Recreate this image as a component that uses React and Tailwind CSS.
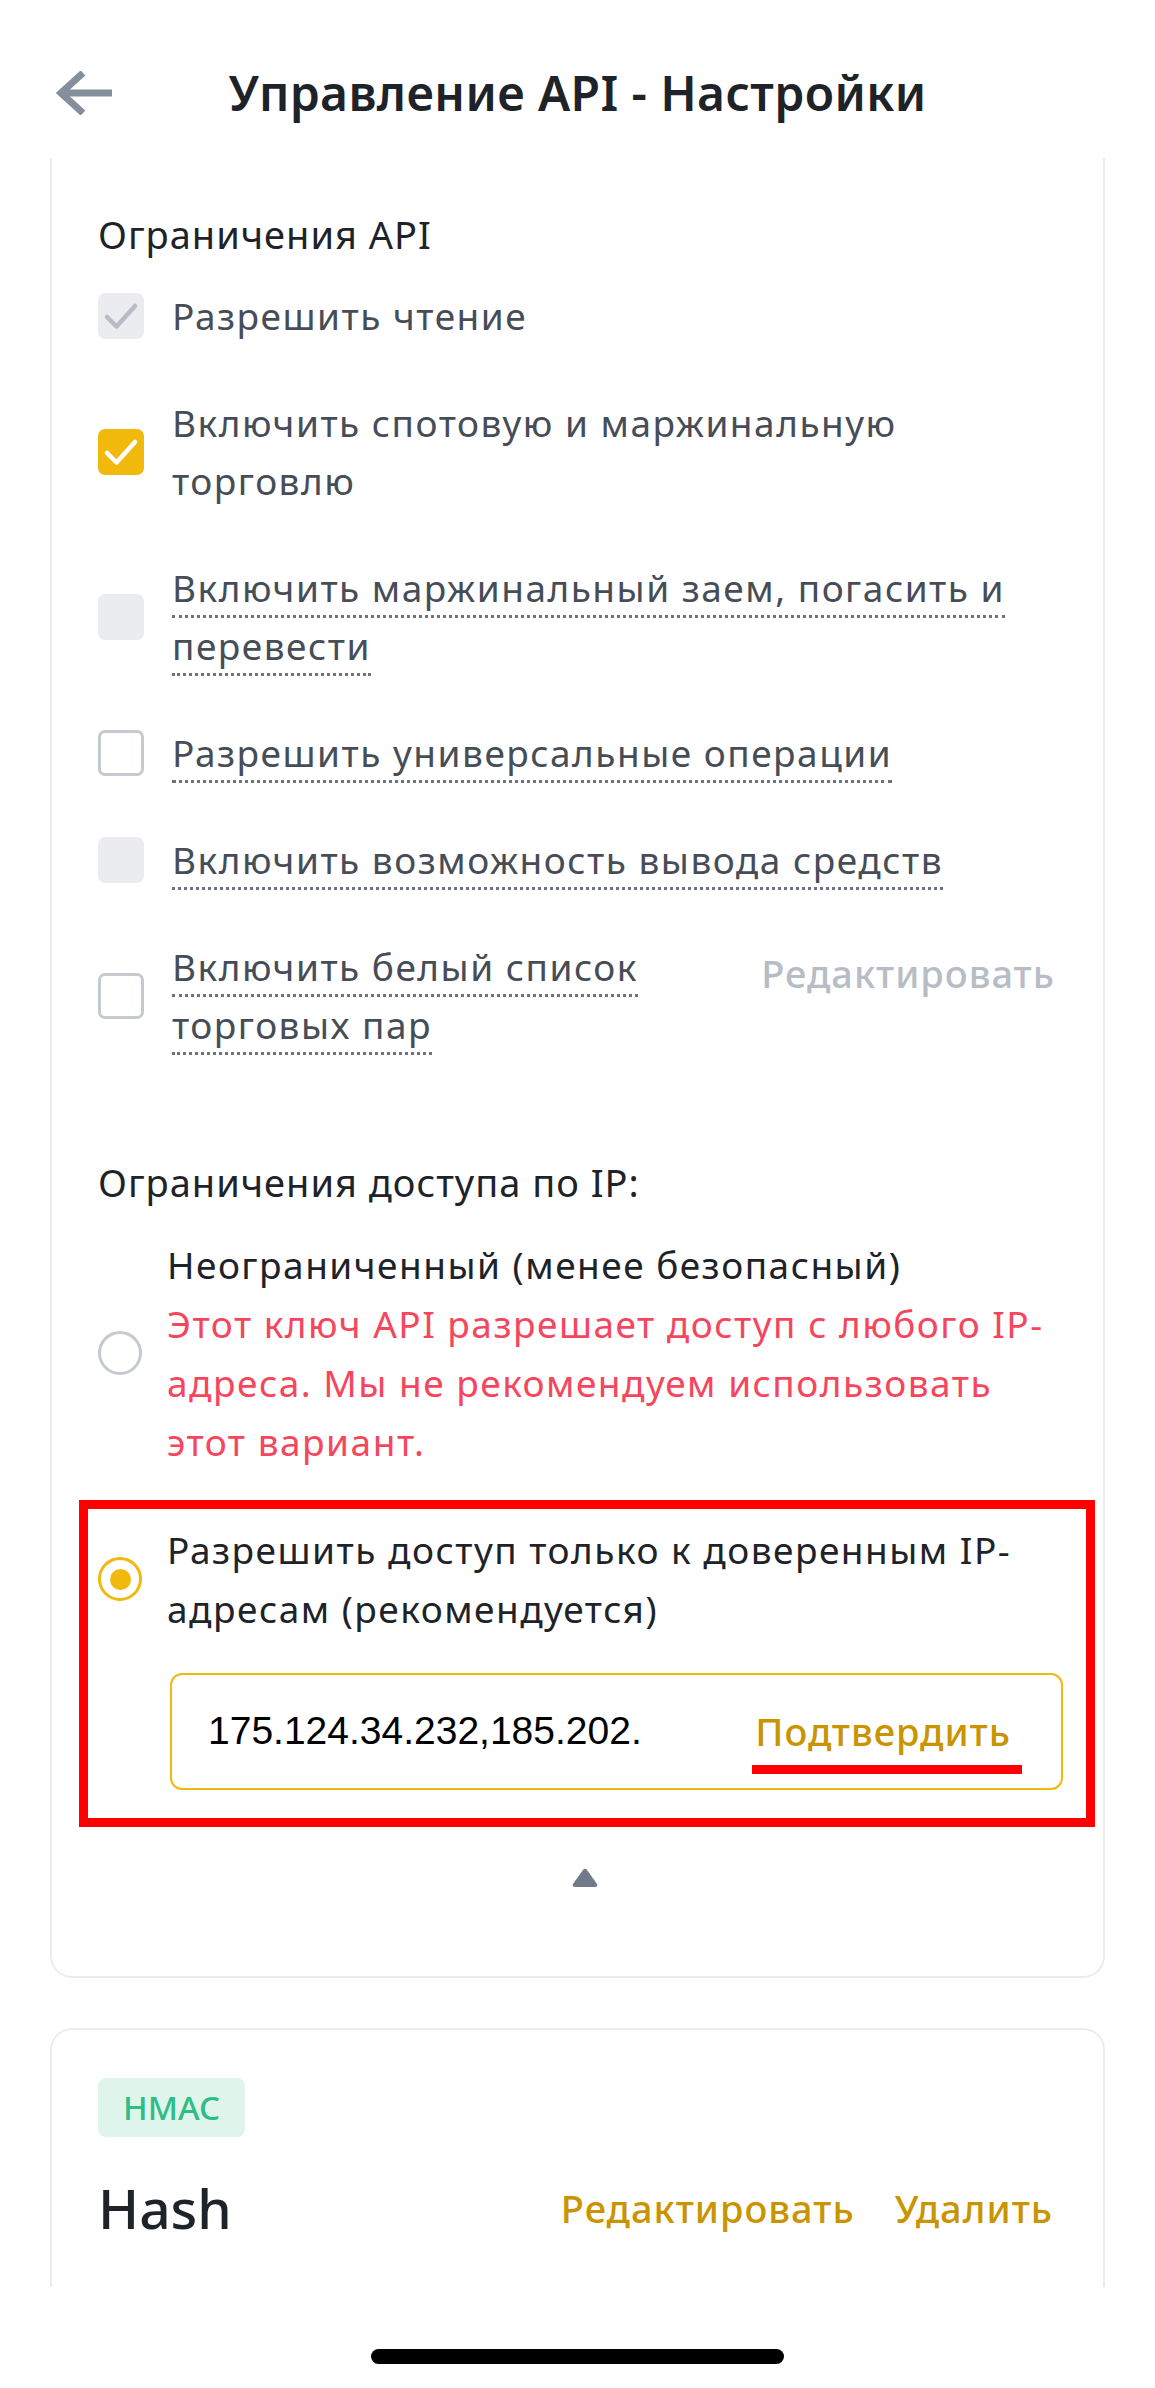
import React from 'react'

// ── Permission rows, as seen in the card ──
const ROWS = [
  { lines: ['Разрешить чтение'], state: 'lockedOn' },
  { lines: ['Включить спотовую и маржинальную', 'торговлю'], state: 'on' },
  { lines: ['Включить маржинальный заем, погасить и', 'перевести'], state: 'locked', dotted: true },
  { lines: ['Разрешить универсальные операции'], state: 'off', dotted: true },
  { lines: ['Включить возможность вывода средств'], state: 'locked', dotted: true },
  { lines: ['Включить белый список', 'торговых пар'], state: 'off', dotted: true, action: 'Редактировать' },
]

function Tick({ color }) {
  return (
    <svg viewBox="0 0 46 46" width="46" height="46">
      <polyline points="9,24 18.5,33.5 37,13" fill="none" stroke={color} strokeWidth="4.5" strokeLinecap="round" strokeLinejoin="round" />
    </svg>
  )
}

function Checkbox({ state }) {
  if (state === 'on') {
    return (
      <div className="h-[46px] w-[46px] shrink-0 rounded-[7px] bg-[#F0B90B]">
        <Tick color="#FFFFFF" />
      </div>
    )
  }
  if (state === 'lockedOn') {
    return (
      <div className="h-[46px] w-[46px] shrink-0 rounded-[7px] bg-[#EAECEF]">
        <Tick color="#B7BDC6" />
      </div>
    )
  }
  if (state === 'locked') {
    return <div className="h-[46px] w-[46px] shrink-0 rounded-[7px] bg-[#EAECEF]" />
  }
  return <div className="h-[46px] w-[46px] shrink-0 rounded-[7px] border-[3px] border-[#C5CAD1] bg-white" />
}

function Radio({ on }) {
  if (on) {
    return (
      <div className="flex h-[44px] w-[44px] shrink-0 items-center justify-center rounded-full border-[3px] border-[#F0B90B]">
        <div className="h-[21px] w-[21px] rounded-full bg-[#F0B90B]" />
      </div>
    )
  }
  return <div className="h-[44px] w-[44px] shrink-0 rounded-full border-[3px] border-[#C5CAD1]" />
}

function Lines({ lines }) {
  return lines.map((l, i) => (
    <React.Fragment key={i}>
      {i > 0 && <br />}
      {l}
    </React.Fragment>
  ))
}

function PermissionRow({ lines, state, dotted, action }) {
  return (
    <div className="flex items-center">
      <Checkbox state={state} />
      <div className="ml-[28px] flex-1 whitespace-nowrap text-[37px] leading-[58px] tracking-[1.5px] text-[#474D57]">
        {dotted ? (
          <span className="border-b-[3px] border-dotted border-[#6B7380] pb-[2px]">
            <Lines lines={lines} />
          </span>
        ) : (
          <Lines lines={lines} />
        )}
      </div>
      {action && (
        <div className="mr-[8px] mt-[6px] self-start text-[38px] font-medium leading-[58px] tracking-[1px] text-[#B7BDC6]">{action}</div>
      )}
    </div>
  )
}

export default function App() {
  return (
    <div className="flex h-[2388px] w-[1155px] flex-col overflow-hidden bg-white font-['Noto_Sans',sans-serif]">
      {/* ── Top bar ── */}
      <header className="grid h-[158px] shrink-0 grid-cols-[1fr_auto_1fr] items-center pt-[28px]">
        <div className="pl-[56px]">
          <svg viewBox="0 0 56 44" width="56" height="44">
            <path d="M56 22 H6" stroke="#848E9C" strokeWidth="7" fill="none" />
            <path d="M27 2 L5 22 L27 42" stroke="#848E9C" strokeWidth="7" fill="none" />
          </svg>
        </div>
        <h1 className="text-[48px] font-semibold leading-none tracking-[0.4px] text-[#1E2329]">Управление API - Настройки</h1>
        <div />
      </header>

      {/* ── Scrolling content ── */}
      <main className="flex h-[2129px] shrink-0 flex-col overflow-hidden px-[50px]">
        {/* settings card (top is scrolled under the bar) */}
        <section className="shrink-0 rounded-b-[22px] border-x-2 border-b-2 border-[#EAECEF] pb-[89px] pl-[46px] pr-[40px] pt-[47px]">
          <h2 className="mb-[24px] text-[38px] leading-[58px] tracking-[1px] text-[#1E2329]">Ограничения API</h2>
          <div className="flex flex-col gap-[49px]">
            {ROWS.map((r, i) => (
              <PermissionRow key={i} {...r} />
            ))}
          </div>

          <h2 className="mb-[24px] mt-[99px] text-[38px] leading-[58px] tracking-[1px] text-[#1E2329]">Ограничения доступа по IP:</h2>

          <div className="flex items-center">
            <Radio on={false} />
            <div className="ml-[25px] flex-1 whitespace-nowrap text-[37px] leading-[59px] tracking-[1.5px]">
              <div className="text-[#1E2329]">Неограниченный (менее безопасный)</div>
              <div className="text-[#F6465D]">
                Этот ключ API разрешает доступ с любого IP-
                <br />
                адреса. Мы не рекомендуем использовать
                <br />
                этот вариант.
              </div>
            </div>
          </div>

          {/* highlighted option */}
          <div className="-ml-[19px] -mr-[32px] mt-[29px] border-[9px] border-[#FF0000] pb-[28px] pl-[10px] pr-[23px] pt-[11px]">
            <div className="flex items-center">
              <Radio on />
              <div className="ml-[25px] flex-1 whitespace-nowrap text-[37px] leading-[59px] tracking-[1.5px] text-[#1E2329]">
                Разрешить доступ только к доверенным IP-
                <br />
                адресам (рекомендуется)
              </div>
            </div>
            <div className="ml-[72px] mt-[35px] flex h-[117px] items-center justify-between rounded-[12px] border-2 border-[#F0B90B] pl-[36px] pr-[50px]">
              <span className="font-['Liberation_Sans',sans-serif] text-[39px] text-black">175.124.34.232,185.202.</span>
              <span className="relative text-[38px] font-medium tracking-[1px] text-[#C99400]">
                Подтвердить
                <span className="absolute -left-[3px] -right-[11px] top-[62px] h-[9px] bg-[#FF0000]" />
              </span>
            </div>
          </div>

          <div className="mt-[41px] flex justify-center pl-[8px]">
            <svg viewBox="0 0 26 19" width="26" height="19">
              <path d="M11 2 Q13 -0.5 15 2 L25 16 Q26 19 23 19 H3 Q0 19 1 16 Z" fill="#707A8A" />
            </svg>
          </div>
        </section>

        {/* key card */}
        <section className="mt-[50px] shrink-0 rounded-t-[22px] border-x-2 border-t-2 border-[#EAECEF] pl-[46px] pr-[40px] pt-[48px] pb-[80px]">
          <div className="flex h-[59px] w-[147px] items-center justify-center rounded-[8px] bg-[#DFF5EC] text-[33px] font-medium text-[#2EBD85]">
            HMAC
          </div>
          <div className="mt-[36px] flex items-center">
            <div className="flex-1 text-[55px] font-medium leading-[70px] text-[#1E2329]">Hash</div>
            <div className="mr-[10px] flex gap-[40px] text-[38px] font-medium tracking-[1px] text-[#C99400]">
              <span>Редактировать</span>
              <span>Удалить</span>
            </div>
          </div>
        </section>
      </main>

      {/* ── Home indicator ── */}
      <footer className="flex h-[101px] shrink-0 justify-center pt-[62px]">
        <div className="h-[15px] w-[413px] rounded-full bg-black" />
      </footer>
    </div>
  )
}
